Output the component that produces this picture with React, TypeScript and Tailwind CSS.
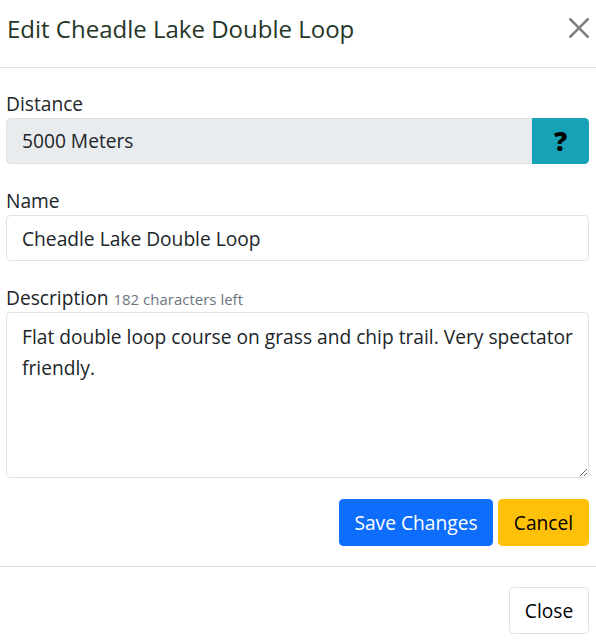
import React from "react";

function CloseIcon() {
  return (
    <svg viewBox="0 0 16 16" className="w-[20px] h-[20px] opacity-50" fill="#000">
      <path d="M.293.293a1 1 0 0 1 1.414 0L8 6.586 14.293.293a1 1 0 1 1 1.414 1.414L9.414 8l6.293 6.293a1 1 0 0 1-1.414 1.414L8 9.414l-6.293 6.293a1 1 0 0 1-1.414-1.414L6.586 8 .293 1.707a1 1 0 0 1 0-1.414z" />
    </svg>
  );
}

export default function App() {
  return (
    <div className="w-[596px] h-[640px] bg-white text-[#212529] font-['Open_Sans',sans-serif] text-[19.2px] leading-[28.8px] overflow-hidden">
      {/* header */}
      <div className="h-[68px] border-b border-[#dee2e6] flex items-start justify-between pt-[15px] pl-[7px] pr-[7px]">
        <h5 className="text-[24px] leading-[28.8px] font-medium text-[#243628]">Edit Cheadle Lake Double Loop</h5>
        <button className="mt-[3px]"><CloseIcon /></button>
      </div>

      {/* body */}
      <div className="h-[499px] border-b border-[#dee2e6] pt-[22px] pl-[6px] pr-[7px] flex flex-col">
        <label className="block h-[28px] leading-[28px]">Distance</label>
        <div className="flex h-[46px]">
          <input
            readOnly
            defaultValue="5000 Meters"
            className="flex-1 min-w-0 bg-[#e9ecef] border border-[#dee2e6] rounded-l-[4.5px] px-[15px] pt-[1px] outline-none"
          />
          <button className="w-[57px] bg-[#17a2b8] rounded-r-[4.5px] font-black text-black text-[26px] leading-none">?</button>
        </div>

        <label className="block h-[28px] leading-[28px] mt-[23px]">Name</label>
        <input
          readOnly
          defaultValue="Cheadle Lake Double Loop"
          className="h-[46px] bg-white border border-[#dee2e6] rounded-[4.5px] px-[15px] pt-[1px] outline-none"
        />

        <label className="block h-[28px] leading-[28px] mt-[23px]">
          Description <span className="text-[15px] text-[#6c757d]">182 characters left</span>
        </label>
        <textarea
          readOnly
          defaultValue="Flat double loop course on grass and chip trail. Very spectator friendly."
          className="h-[166px] bg-white border border-[#dee2e6] rounded-[4.5px] px-[15px] py-[8px] leading-[31px] outline-none"
        />

        <div className="flex justify-end gap-[5px] mt-[21px]">
          <button className="w-[154px] h-[47px] pt-[2px] bg-[#0d6efd] text-white rounded-[4.5px]">Save Changes</button>
          <button className="w-[91px] h-[47px] pt-[2px] bg-[#ffc107] text-black rounded-[4.5px]">Cancel</button>
        </div>
      </div>

      {/* footer */}
      <div className="flex justify-end pt-[20px] pr-[7px]">
        <button className="w-[80px] h-[47px] pt-[2px] bg-white border border-[#dee2e6] rounded-[4.5px] text-black">Close</button>
      </div>
    </div>
  );
}
